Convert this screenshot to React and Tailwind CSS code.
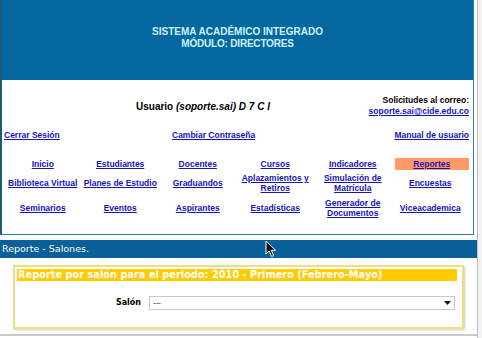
export default function App() {
  const link = "text-[#1414b8] underline font-bold";
  const cell = "flex items-center justify-center text-center leading-[10px]";
  return (
    <div className="relative w-[482px] h-[338px] bg-white overflow-hidden flex" style={{ fontFamily: '"Liberation Sans", Arial, sans-serif' }}>
      <div className="w-[477px] flex flex-col">
        {/* top box */}
        <div className="w-[474px] h-[235px] border-l-2 border-r border-b border-l-[#1d5c78] border-r-[#2a8aae] border-b-[#2f7a98] flex flex-col">
          <div className="h-[80px] bg-[#04679f] flex flex-col items-center justify-center pb-[4px] text-[#cdf3ff] font-bold text-[10px] leading-[12px]">
            <div>SISTEMA ACADÉMICO INTEGRADO</div>
            <div className="tracking-[-0.2px]">MÓDULO: DIRECTORES</div>
          </div>
          <div className="flex-1 px-[2px] text-[8.5px]">
            <div className="flex items-center justify-between pt-[15px] pl-[132px] pr-[2px]">
              <div className="text-[10px] font-bold text-black">
                Usuario <span className="italic">(soporte.sai) D 7 C I</span>
              </div>
              <div className="text-right leading-[11px]">
                <div className="font-bold text-black">Solicitudes al correo:</div>
                <div className={link}>soporte.sai@cide.edu.co</div>
              </div>
            </div>
            <div className="flex items-center mt-[13px] leading-[11px] pr-[2px]">
              <div className={`${link} w-[168px]`}>Cerrar Sesión</div>
              <div className={`${link} flex-1`}>Cambiar Contraseña</div>
              <div className={link}>Manual de usuario</div>
            </div>
            <div className="grid grid-cols-6 grid-rows-[12px_24px_24px] gap-y-[1px] mt-[17px] pr-[2px]">
              <div className={`${cell} ${link}`}>Inicio</div>
              <div className={`${cell} ${link}`}>Estudiantes</div>
              <div className={`${cell} ${link}`}>Docentes</div>
              <div className={`${cell} ${link}`}>Cursos</div>
              <div className={`${cell} ${link}`}>Indicadores</div>
              <div className={`${cell} ${link} bg-[#ff9966] ml-[3px]`}>Reportes</div>
              <div className={`${cell} ${link}`}>Biblioteca Virtual</div>
              <div className={`${cell} ${link}`}>Planes de Estudio</div>
              <div className={`${cell} ${link}`}>Graduandos</div>
              <div className={`${cell} ${link}`}>Aplazamientos y<br />Retiros</div>
              <div className={`${cell} ${link}`}>Simulación de<br />Matrícula</div>
              <div className={`${cell} ${link}`}>Encuestas</div>
              <div className={`${cell} ${link}`}>Seminarios</div>
              <div className={`${cell} ${link}`}>Eventos</div>
              <div className={`${cell} ${link}`}>Aspirantes</div>
              <div className={`${cell} ${link}`}>Estadísticas</div>
              <div className={`${cell} ${link}`}>Generador de<br />Documentos</div>
              <div className={`${cell} ${link}`}>Viceacademica</div>
            </div>
          </div>
        </div>
        {/* blue bar */}
        <div className="mt-[5px] h-[18px] bg-[#0a6199] flex items-center pl-[2px] text-white text-[9.5px]" style={{ fontFamily: '"DejaVu Sans", Verdana, sans-serif' }}>
          Reporte - Salones.
        </div>
        {/* report box */}
        <div className="ml-[13px] mt-[7px] w-[451px] h-[64px] border-2 border-[#f0dc86] shadow-[1px_1px_2px_#d8cfa8] pt-[2px] pl-[2px] pr-[5px]">
          <div className="h-[12px] bg-[#ffcc00] flex items-center pl-[1px] text-white font-bold text-[9.8px] whitespace-nowrap" style={{ fontFamily: '"DejaVu Sans", Verdana, sans-serif' }}>
            Reporte por salón para el periodo: 2010 - Primero (Febrero-Mayo)
          </div>
          <div className="flex items-center mt-[15px]">
            <div className="w-[132px] pr-[8px] text-right font-bold text-[8px] text-black" style={{ fontFamily: '"DejaVu Sans", Verdana, sans-serif' }}>Salón</div>
            <div className="w-[306px] h-[14px] border border-[#c8c8c8] bg-white flex items-center justify-between px-[3px] text-[8px] text-black">
              <span>---</span>
              <svg width="7" height="4" viewBox="0 0 7 4"><path d="M0 0h7L3.5 4z" fill="#111" /></svg>
            </div>
          </div>
        </div>
        <div className="mt-[5px] h-[2px] bg-[#c9c9c9]" />
      </div>
      <div className="flex-1 bg-[#f3f3f3] border-l border-[#bdbdbd]" />
      {/* cursor */}
      <svg className="absolute left-[265px] top-[240px]" width="13" height="18" viewBox="0 0 13 18">
        <path d="M1 1 L1 14 L4.2 11 L6.6 16.5 L8.6 15.6 L6.3 10.3 L10.6 10.3 Z" fill="#111" stroke="#fff" strokeWidth="1" />
      </svg>
    </div>
  );
}
